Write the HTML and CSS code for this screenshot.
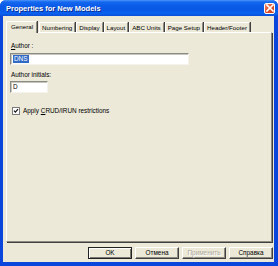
FILE: index.html
```
<!DOCTYPE html>
<html>
<head>
<meta charset="utf-8">
<link rel="stylesheet" href="styles.css">
</head>
<body>
<div class="window">
  <div class="titlebar">
    <span class="title">Properties for New Models</span>
    <span class="close"><svg width="8" height="8" viewBox="0 0 8 8"><path d="M1 1L7 7M7 1L1 7" stroke="#fff" stroke-width="1.6" stroke-linecap="square"/></svg></span>
  </div>
  <div class="client">
    <div class="tabs">
      <div class="tab sel">General</div>
      <div class="tab">Numbering</div>
      <div class="tab">Display</div>
      <div class="tab">Layout</div>
      <div class="tab">ABC Units</div>
      <div class="tab">Page Setup</div>
      <div class="tab">Header/Footer</div>
    </div>
    <div class="panel">
      <div class="label"><u>A</u>uthor :</div>
      <div class="input wide"><span class="hl">DNS</span></div>
      <div class="label l2">Author initials:</div>
      <div class="input narrow">D</div>
      <div class="check">
        <svg class="box" width="8" height="8" viewBox="0 0 8 8"><rect x="0.5" y="0.5" width="7" height="7" fill="#fff" stroke="#7a7a7a"/><path d="M2 3.6L3.4 5.2L6 2.2" fill="none" stroke="#111" stroke-width="1.2"/></svg>
        <span>Apply <u>C</u>RUD/IRUN restrictions</span>
      </div>
    </div>
    <div class="buttons">
      <div class="btn def">OK</div>
      <div class="btn">Отмена</div>
      <div class="btn dis">Применить</div>
      <div class="btn">Справка</div>
    </div>
  </div>
</div>
</body>
</html>
```
FILE: styles.css
```
html, body { margin: 0; padding: 0; background: #fff; }
body { font-family: "Liberation Sans", Arial, sans-serif; }
.window {
  width: 278px; height: 266px; box-sizing: border-box;
  display: flex; flex-direction: column;
  background: #0a45dc;
  border-radius: 6px 6px 0 0;
  overflow: hidden;
}
.titlebar {
  height: 16px; flex: none;
  display: flex; align-items: center; justify-content: space-between;
  padding: 0 3px 0 6px;
  background: linear-gradient(#4d95fb 0, #1468ee 2px, #0a5be8 6px, #0958e6 10px, #0a62f0 13px, #0a4fd8 16px);
}
.title {
  color: #fff; font-weight: bold; font-size: 7.5px;
  text-shadow: 1px 1px 0 #0a2a8a;
}
.close {
  width: 11px; height: 11px; box-sizing: border-box;
  border: 1px solid #fff; border-radius: 2px;
  background: linear-gradient(135deg, #f08a6a, #e0502c 50%, #c8401e);
  display: flex; align-items: center; justify-content: center;
}
.close svg { display: block; }
.client {
  flex: 1; display: flex; flex-direction: column;
  margin: 0 4px 4px 3px;
  background: #ece9d8;
  padding: 4px 2px 3px 3px;
}
.tabs {
  display: flex; align-items: flex-end; height: 12px; flex: none;
  padding-left: 2px; position: relative; z-index: 1;
}
.tab {
  height: 10px; box-sizing: border-box;
  padding: 0 2px; margin-right: 1px;
  border: 1px solid; border-color: #fff #8d8a80 transparent #fff;
  border-bottom: none;
  box-shadow: 1px 0 0 #404040;
  background: #ece9d8;
  font-size: 6.2px; line-height: 9px; color: #000; white-space: nowrap;
}
.tab.sel {
  height: 12px; margin-bottom: -1px; margin-left: -2px; margin-right: 2px;
  line-height: 10px; padding: 0 3px 0 4px;
}
.panel {
  flex: 1;
  border: 1px solid; border-color: #fff #8d8a80 #8d8a80 #fff;
  box-shadow: 1px 1px 0 #404040;
  padding: 9px 3px 0 3px;
  font-size: 6.4px; color: #000;
}
.label { line-height: 8px; height: 8px; margin-left: 1px; }
.label.l2 { margin-top: 6px; }
.input {
  margin-top: 3px; height: 12px; box-sizing: border-box;
  background: #fff;
  border: 1px solid; border-color: #8a8a86 #f4f3ee #f4f3ee #8a8a86;
  box-shadow: inset 1px 1px 0 #c8c6ba;
  padding: 1px 0 0 2px; line-height: 8px;
}
.input.wide { width: 179px; }
.input.narrow { width: 38px; margin-top: 2px; }
.hl { background: #316ac5; color: #fff; display: inline-block; padding: 0 1px; }
.check {
  margin-top: 14px; margin-left: 2px;
  display: flex; align-items: center; gap: 3px; height: 8px; line-height: 8px;
}
.box { display: block; flex: none; }
.buttons {
  flex: none; height: 12px; margin-top: 5px; margin-right: -1px;
  display: flex; justify-content: flex-end; gap: 3px;
}
.btn {
  width: 44px; height: 12px; box-sizing: border-box;
  border: 1px solid; border-color: #fff #404040 #404040 #fff;
  box-shadow: inset -1px -1px 0 #8d8a80;
  font-size: 6.4px; line-height: 10px; text-align: center; color: #000;
}
.btn.def { border-color: #222; box-shadow: inset 1px 1px 0 #fff, inset -1px -1px 0 #7a7870; }
.btn.dis { color: #aca899; text-shadow: 1px 1px 0 #fff; }
```
